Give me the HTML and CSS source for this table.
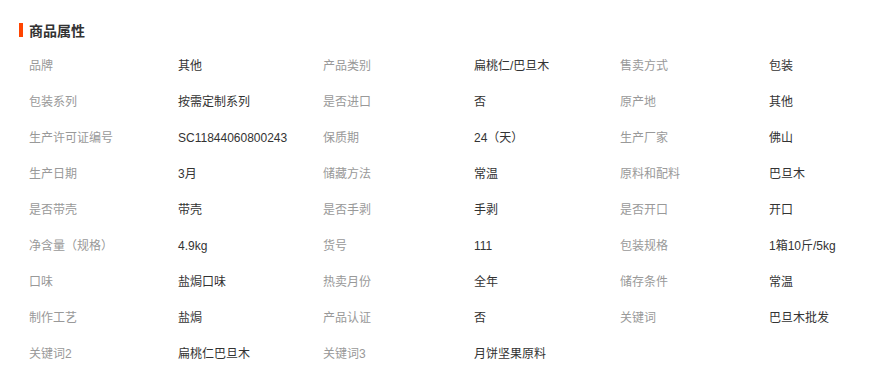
FILE: index.html
```html
<!DOCTYPE html>
<html lang="zh">
<head>
<meta charset="utf-8">
<link rel="stylesheet" href="styles.css">
</head>
<body>
<div class="attrs">
  <h3 class="title">商品属性</h3>
  <div class="grid">
    <span class="k">品牌</span><span class="v">其他</span>
    <span class="k">产品类别</span><span class="v">扁桃仁/巴旦木</span>
    <span class="k">售卖方式</span><span class="v">包装</span>

    <span class="k">包装系列</span><span class="v">按需定制系列</span>
    <span class="k">是否进口</span><span class="v">否</span>
    <span class="k">原产地</span><span class="v">其他</span>

    <span class="k">生产许可证编号</span><span class="v">SC11844060800243</span>
    <span class="k">保质期</span><span class="v">24（天）</span>
    <span class="k">生产厂家</span><span class="v">佛山</span>

    <span class="k">生产日期</span><span class="v">3月</span>
    <span class="k">储藏方法</span><span class="v">常温</span>
    <span class="k">原料和配料</span><span class="v">巴旦木</span>

    <span class="k">是否带壳</span><span class="v">带壳</span>
    <span class="k">是否手剥</span><span class="v">手剥</span>
    <span class="k">是否开口</span><span class="v">开口</span>

    <span class="k">净含量（规格）</span><span class="v">4.9kg</span>
    <span class="k">货号</span><span class="v">111</span>
    <span class="k">包装规格</span><span class="v">1箱10斤/5kg</span>

    <span class="k">口味</span><span class="v">盐焗口味</span>
    <span class="k">热卖月份</span><span class="v">全年</span>
    <span class="k">储存条件</span><span class="v">常温</span>

    <span class="k">制作工艺</span><span class="v">盐焗</span>
    <span class="k">产品认证</span><span class="v">否</span>
    <span class="k">关键词</span><span class="v">巴旦木批发</span>

    <span class="k">关键词2</span><span class="v">扁桃仁巴旦木</span>
    <span class="k">关键词3</span><span class="v">月饼坚果原料</span>
  </div>
</div>
</body>
</html>
```

FILE: styles.css
```css
html, body {
  margin: 0;
  padding: 0;
  background: #fff;
}
body {
  font-family: "Liberation Sans", "Noto Sans CJK SC", sans-serif;
  font-size: 12px;
  color: #333;
}
.attrs {
  padding: 23px 0 0 19px;
}
.title {
  margin: 0;
  font-size: 14px;
  line-height: 15px;
  height: 14px;
  font-weight: bold;
  color: #333;
  border-left: 4px solid #ff4400;
  padding-left: 6px;
  padding-top: 1px;
  box-sizing: border-box;
  height: 14px;
  overflow: visible;
}
.grid {
  margin: 11px 0 0 10px;
  display: grid;
  grid-template-columns: 149px 145px 151px 146px 149px 1fr;
  grid-auto-rows: 36px;
  line-height: 36px;
}
.k {
  color: #999;
  white-space: nowrap;
}
.v {
  color: #333;
  white-space: nowrap;
}
```
